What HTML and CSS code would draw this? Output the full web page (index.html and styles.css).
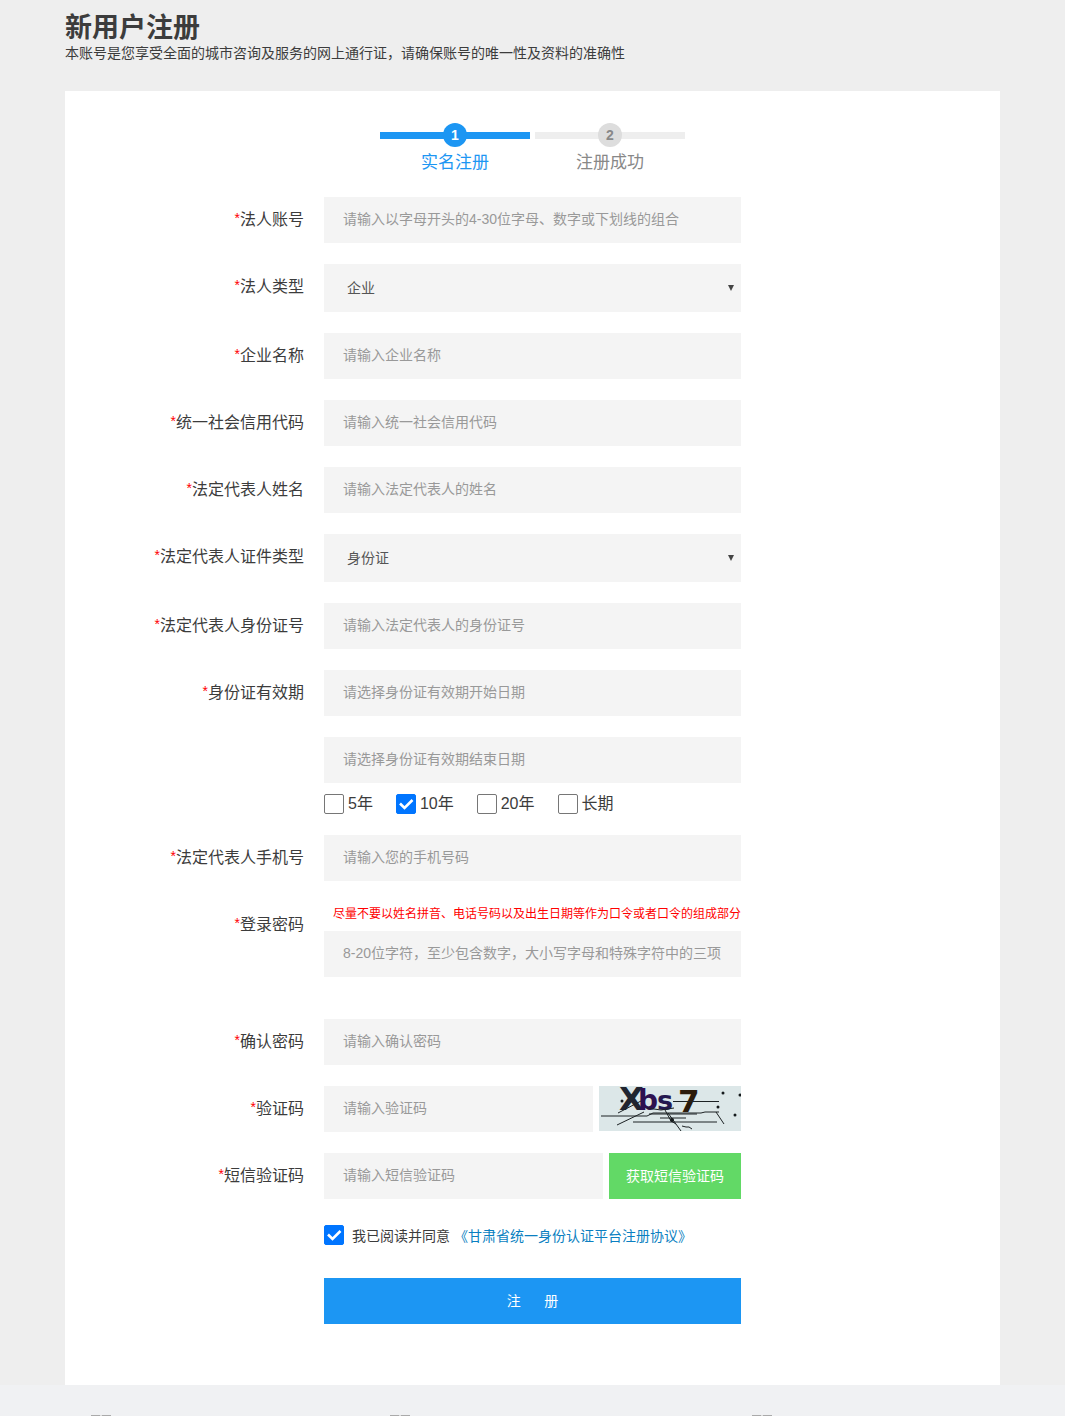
FILE: index.html
```
<!DOCTYPE html>
<html lang="zh-CN">
<head>
    <meta charset="UTF-8">
    <meta name="viewport" content="width=device-width, initial-scale=1.0">
    <title>新用户注册</title>
    <link rel="stylesheet" href="styles.css">
</head>
<body>
    <div class="page">
        <header class="header">
            <h1>新用户注册</h1>
            <p>本账号是您享受全面的城市咨询及服务的网上通行证，请确保账号的唯一性及资料的准确性</p>
        </header>

        <main class="card">
            <!-- 步骤 -->
            <ol class="steps">
                <li class="step active">
                    <div class="step-bar"><span class="step-num">1</span></div>
                    <div class="step-text">实名注册</div>
                </li>
                <li class="step">
                    <div class="step-bar"><span class="step-num">2</span></div>
                    <div class="step-text">注册成功</div>
                </li>
            </ol>

            <form class="form">
                <div class="row">
                    <label class="label" for="account"><i>*</i>法人账号</label>
                    <div class="field"><input class="input" type="text" id="account" placeholder="请输入以字母开头的4-30位字母、数字或下划线的组合"></div>
                </div>
                <div class="row">
                    <label class="label" for="type"><i>*</i>法人类型</label>
                    <div class="field">
                        <select class="select" id="type">
                            <option>企业</option>
                        </select>
                    </div>
                </div>
                <div class="row">
                    <label class="label" for="company"><i>*</i>企业名称</label>
                    <div class="field"><input class="input" type="text" id="company" placeholder="请输入企业名称"></div>
                </div>
                <div class="row">
                    <label class="label" for="code"><i>*</i>统一社会信用代码</label>
                    <div class="field"><input class="input" type="text" id="code" placeholder="请输入统一社会信用代码"></div>
                </div>
                <div class="row">
                    <label class="label" for="name"><i>*</i>法定代表人姓名</label>
                    <div class="field"><input class="input" type="text" id="name" placeholder="请输入法定代表人的姓名"></div>
                </div>
                <div class="row">
                    <label class="label" for="cert-type"><i>*</i>法定代表人证件类型</label>
                    <div class="field">
                        <select class="select" id="cert-type">
                            <option>身份证</option>
                        </select>
                    </div>
                </div>
                <div class="row">
                    <label class="label" for="cert-no"><i>*</i>法定代表人身份证号</label>
                    <div class="field"><input class="input" type="text" id="cert-no" placeholder="请输入法定代表人的身份证号"></div>
                </div>
                <div class="row">
                    <label class="label" for="date-start"><i>*</i>身份证有效期</label>
                    <div class="field"><input class="input" type="text" id="date-start" placeholder="请选择身份证有效期开始日期"></div>
                </div>
                <div class="row">
                    <div class="label"></div>
                    <div class="field">
                        <input class="input" type="text" id="date-end" aria-label="身份证有效期结束日期" placeholder="请选择身份证有效期结束日期">
                        <div class="years">
                            <label><input type="checkbox">5年</label>
                            <label><input type="checkbox" checked>10年</label>
                            <label><input type="checkbox">20年</label>
                            <label><input type="checkbox">长期</label>
                        </div>
                    </div>
                </div>
                <div class="row">
                    <label class="label" for="phone"><i>*</i>法定代表人手机号</label>
                    <div class="field"><input class="input" type="text" id="phone" placeholder="请输入您的手机号码"></div>
                </div>
                <div class="row row-password">
                    <label class="label" for="password"><i>*</i>登录密码</label>
                    <div class="field">
                        <p class="hint">尽量不要以姓名拼音、电话号码以及出生日期等作为口令或者口令的组成部分</p>
                        <input class="input" type="password" id="password" placeholder="8-20位字符，至少包含数字，大小写字母和特殊字符中的三项">
                    </div>
                </div>
                <div class="row">
                    <label class="label" for="password2"><i>*</i>确认密码</label>
                    <div class="field"><input class="input" type="password" id="password2" placeholder="请输入确认密码"></div>
                </div>
                <div class="row">
                    <label class="label" for="captcha"><i>*</i>验证码</label>
                    <div class="field inline">
                        <input class="input" type="text" id="captcha" placeholder="请输入验证码">
                        <svg class="captcha" viewBox="0 0 142 45" role="img" aria-label="验证码图片">
                            <rect width="142" height="45" fill="#dce7e8"/>
                            <text y="24" font-family="DejaVu Sans" font-weight="bold"><tspan x="20" font-size="32" fill="#202530">X</tspan><tspan x="39" font-size="28" fill="#2e1150">b</tspan><tspan x="58" font-size="27" fill="#24184f">s</tspan><tspan x="79" y="26" font-size="31" fill="#2b1b0b">7</tspan></text>
                            <g stroke="#1c2224" stroke-width="1" fill="none">
                                <path d="M2 30H48L54 27H78L102 27L106 26H120"/>
                                <path d="M74 15.500H120M34 36H118M61 32H87M50 28H98"/>
                                <path d="M18 39L45 26M19 27L42 15M69 27L82 45M66 24L72 35L77 38M117 26L125 38"/>
                                <path d="M83 40L87 41H90L93 43M48 22L62 24L75 22"/>
                            </g>
                            <g fill="#151a1c">
                                <circle cx="23" cy="15" r="1.500"/>
                                <circle cx="124" cy="7" r="1.500"/>
                                <circle cx="141" cy="9" r="1.500"/>
                                <circle cx="119" cy="21" r="1.500"/>
                                <circle cx="136" cy="29" r="1.500"/>
                                <circle cx="73" cy="34" r="2"/>
                            </g>
                        </svg>
                    </div>
                </div>
                <div class="row">
                    <label class="label" for="sms"><i>*</i>短信验证码</label>
                    <div class="field inline">
                        <input class="input" type="text" id="sms" placeholder="请输入短信验证码">
                        <button class="btn-sms" type="button">获取短信验证码</button>
                    </div>
                </div>
                <div class="row row-submit">
                    <div class="label"></div>
                    <div class="field">
                        <div class="agree">
                            <input type="checkbox" id="agree" checked>
                            <label for="agree">我已阅读并同意</label>
                            <a href="#">《甘肃省统一身份认证平台注册协议》</a>
                        </div>
                        <button class="btn-submit" type="submit">注&nbsp;&nbsp;&nbsp;&nbsp;&nbsp;&nbsp;册</button>
                    </div>
                </div>
            </form>
        </main>

        <footer class="footer">
            <span></span>
            <span></span>
            <span></span>
        </footer>
    </div>
</body>
</html>
```

FILE: styles.css
```
* {
    box-sizing: border-box;
}
body {
    margin: 0;
    background: #fff;
    color: #3c3c3c;
    font-family: "Liberation Sans", "Noto Sans CJK SC", sans-serif;
    font-size: 14px;
}
h1, p, ol {
    margin: 0;
    padding: 0;
}
input, select, button {
    font-family: inherit;
    font-size: 14px;
}
.page {
    margin-right: 15px;
    background: #eee;
}

/* 页头 */
.header {
    padding: 13px 65px 28px;
}
.header h1 {
    font-size: 27px;
    line-height: 30px;
}
.header p {
    line-height: 20px;
}

.card {
    margin: 0 65px;
    padding: 32px 0 61px;
    background: #fff;
}

/* 步骤条 */
.steps {
    display: flex;
    justify-content: center;
    gap: 5px;
    margin-bottom: 18px;
    list-style: none;
    text-align: center;
}
.step {
    width: 150px;
    color: #888;
}
.step-bar {
    display: flex;
    justify-content: center;
    background: linear-gradient(#eee, #eee) center / 100% 7px no-repeat;
}
.step-num {
    width: 24px;
    height: 24px;
    border-radius: 50%;
    background: #ddd;
    font-weight: bold;
    line-height: 24px;
}
.step-text {
    font-size: 17px;
    line-height: 32px;
}
.step.active {
    color: #1c96f3;
}
.step.active .step-bar {
    background-image: linear-gradient(#1c96f3, #1c96f3);
}
.step.active .step-num {
    background: #1c96f3;
    color: #fff;
}

/* 表单 */
.row {
    display: flex;
    gap: 20px;
    margin-bottom: 21px;
}
.row-password {
    margin-bottom: 42px;
}
.row-submit {
    margin-bottom: 0;
}
.label {
    flex: 0 0 239px;
    font-size: 16px;
    line-height: 46px;
    text-align: right;
}
.label i {
    color: #f00;
    font-size: 14px;
    font-style: normal;
    line-height: 1;
    vertical-align: 2px;
}
.field {
    flex: 0 1 417px;
    min-width: 0;
}
.inline {
    display: flex;
    gap: 6px;
}
.input {
    display: block;
    width: 100%;
    min-width: 0;
    height: 46px;
    padding: 0 19px 2px;
    border: 0;
    background: #f4f4f4;
}
.input::placeholder {
    color: #999;
}
.select {
    display: block;
    width: 100%;
    height: 48px;
    padding: 0 23px;
    border: 0;
    border-radius: 0;
    appearance: none;
    background: #f4f4f4 url("data:image/svg+xml,%3Csvg xmlns='http://www.w3.org/2000/svg' width='6' height='6'%3E%3Cpath d='M0 0h6L3 6z' fill='%23444'/%3E%3C/svg%3E") right 7px center no-repeat;
    color: #555;
}
input[type="checkbox"] {
    flex: none;
    width: 20px;
    height: 20px;
    margin: 0;
    border: 1px solid #767676;
    border-radius: 2px;
    appearance: none;
    background: #fff;
}
input[type="checkbox"]:checked {
    border-color: #0075ff;
    background: #0075ff url("data:image/svg+xml,%3Csvg xmlns='http://www.w3.org/2000/svg' width='18' height='18'%3E%3Cpath d='M3 8.500L7.500 13L15.500 5' fill='none' stroke='%23fff' stroke-width='2.600'/%3E%3C/svg%3E") center no-repeat;
}
.years {
    display: flex;
    gap: 23px;
    margin-top: 10px;
    font-size: 16px;
    line-height: 21px;
}
.years label {
    display: flex;
    align-items: center;
    gap: 4px;
}
.hint {
    margin-bottom: 4px;
    padding-left: 9px;
    color: #f00;
    font-size: 12px;
    line-height: 25px;
    white-space: nowrap;
}
.captcha {
    flex: none;
    width: 142px;
    height: 45px;
}
.btn-sms {
    flex: none;
    width: 132px;
    padding: 0 0 2px;
    border: 0;
    background: #62d966;
    color: #fff;
}
.agree {
    display: flex;
    align-items: center;
    height: 30px;
    margin-bottom: 28px;
}
.agree label {
    margin: 0 4px 0 8px;
}
.agree a {
    color: #0b7fc1;
    text-decoration: none;
}
.btn-submit {
    display: block;
    width: 100%;
    height: 46px;
    padding: 0 0 2px;
    border: 0;
    background: #1c96f3;
    color: #fff;
}

/* 页脚 */
.footer {
    display: grid;
    grid-template-columns: 299px 362px auto;
    align-items: end;
    height: 31px;
    padding-left: 91px;
    background: #f0f1f3;
}
.footer span {
    width: 20px;
    height: 1px;
    background: linear-gradient(90deg, #aaa 9px, #ddd 9px, #ddd 11px, #aaa 11px);
}
```
